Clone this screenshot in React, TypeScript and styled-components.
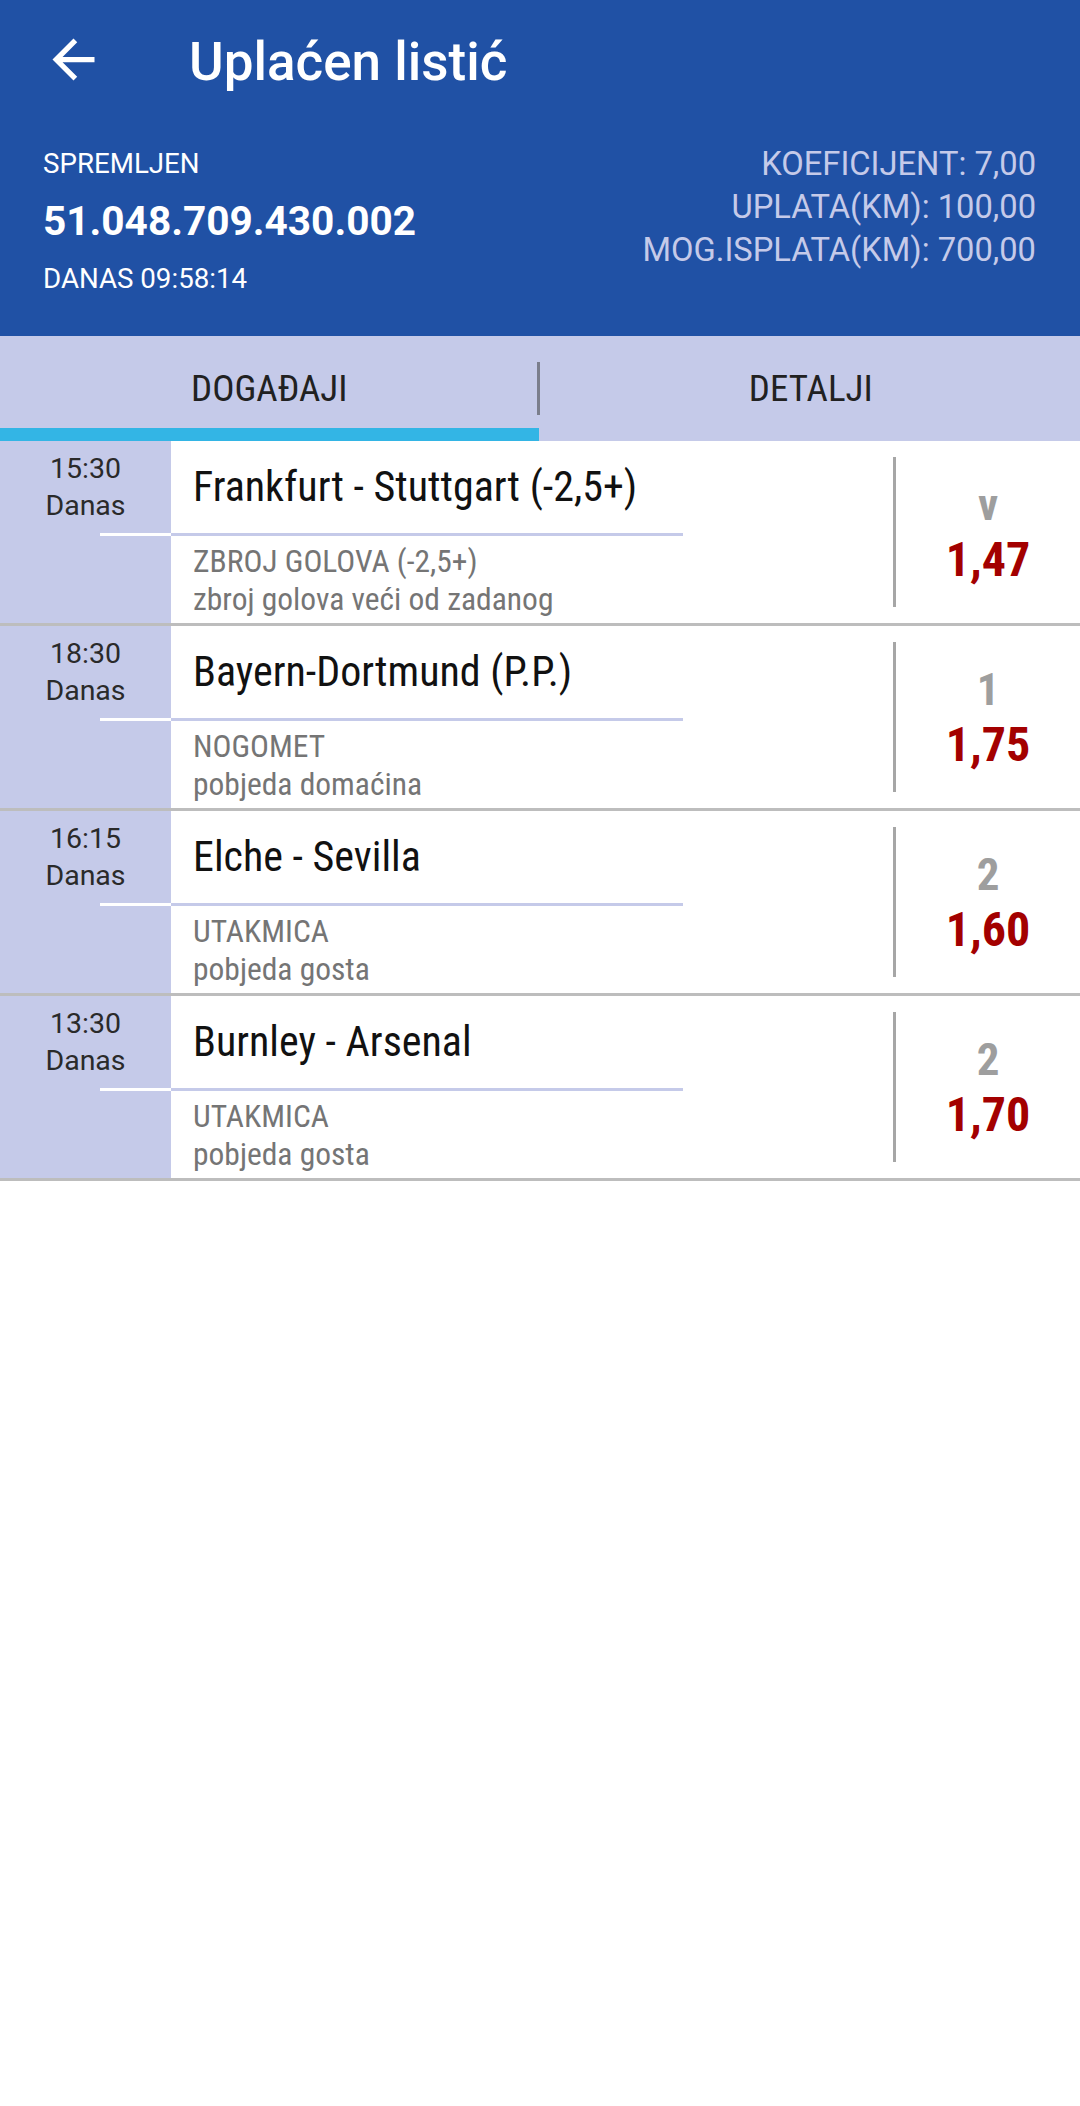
import React from 'react';
import styled, { createGlobalStyle } from 'styled-components';

const CONDENSED = '"Roboto Condensed", Roboto, "Liberation Sans", sans-serif';
const REGULAR = 'Roboto, "Liberation Sans", sans-serif';

const GlobalStyle = createGlobalStyle`
  html, body {
    margin: 0;
    padding: 0;
    background: #ffffff;
  }
  body {
    font-family: ${CONDENSED};
    -webkit-font-smoothing: antialiased;
  }
  * {
    box-sizing: border-box;
  }
`;

const Page = styled.div`
  width: 1080px;
  min-height: 2106px;
  background: #ffffff;
`;

const Header = styled.header`
  background: #2051a5;
  height: 336px;
  display: flex;
  flex-direction: column;
  font-family: ${REGULAR};
`;

const Toolbar = styled.div`
  height: 124px;
  display: flex;
  align-items: center;
  padding-left: 42px;
`;

const BackButton = styled.div`
  width: 63px;
  height: 63px;
  margin-top: -5px;
  display: flex;
  svg {
    width: 63px;
    height: 63px;
  }
`;

const Title = styled.h1`
  margin: 0 0 0 84px;
  font-size: 53px;
  line-height: 60px;
  font-weight: 500;
  color: #ffffff;
`;

const Info = styled.div`
  display: flex;
  justify-content: space-between;
  padding: 20px 44px 0 43px;
`;

const InfoLeft = styled.div`
  display: flex;
  flex-direction: column;
  color: #ffffff;
`;

const InfoLabel = styled.div<{ $gap?: number }>`
  font-size: 27.7px;
  line-height: 40px;
  margin-top: ${({ $gap }) => $gap ?? 0}px;
`;

const TicketNo = styled.div`
  font-size: 40.6px;
  line-height: 50px;
  font-weight: 700;
  margin-top: 12px;
`;

const InfoRight = styled.div`
  display: flex;
  flex-direction: column;
  align-items: flex-end;
  color: #c5cae9;
  font-size: 32.7px;
  line-height: 43px;
  margin-top: -1px;
`;

const Tabs = styled.nav`
  height: 105px;
  background: #c5cae9;
  display: flex;
  align-items: stretch;
`;

const Tab = styled.div<{ $active?: boolean }>`
  flex: 1;
  display: flex;
  align-items: center;
  justify-content: center;
  font-size: 37px;
  color: #212121;
  box-shadow: ${({ $active }) => ($active ? 'inset 0 -13px 0 #33b5e5' : 'none')};
`;

const TabDivider = styled.div`
  width: 3px;
  height: 53px;
  margin-left: -2px;
  margin-right: 2px;
  align-self: center;
  background: #7b7e8c;
`;

const List = styled.div`
  display: flex;
  flex-direction: column;
`;

const Row = styled.div`
  display: flex;
  height: 185px;
  border-bottom: 3px solid #bdbdbd;
`;

const TimeCol = styled.div`
  width: 171px;
  background: #c5cae9;
  display: flex;
  flex-direction: column;
`;

const TimeBox = styled.div`
  height: 92px;
  padding-top: 9px;
  text-align: center;
  color: #2a2a2a;
  font-family: ${REGULAR};
  font-size: 28.5px;
  line-height: 37px;
`;

const TimeRule = styled.div`
  height: 3px;
  margin-left: 100px;
  background: #ffffff;
`;

const Main = styled.div`
  flex: 1;
  display: flex;
  flex-direction: column;
`;

const EventName = styled.div`
  width: 512px;
  height: 95px;
  padding-left: 22px;
  border-bottom: 3px solid #c5cae9;
  font-size: 42px;
  line-height: 92px;
  color: #111111;
  white-space: nowrap;
`;

const Market = styled.div`
  padding: 7px 0 0 22px;
  font-size: 31.5px;
  line-height: 38px;
  color: #757575;
  white-space: nowrap;
`;

const VDivider = styled.div`
  width: 3px;
  margin: 16px 0;
  background: #a6a6a6;
`;

const OddsCol = styled.div`
  width: 184px;
  padding-top: 36px;
  text-align: center;
  font-weight: 700;
`;

const Pick = styled.div`
  font-size: 45px;
  line-height: 55px;
  color: #9e9e9e;
`;

const Odd = styled.div`
  font-size: 48px;
  line-height: 55px;
  color: #a30000;
`;

const BackArrow = () => (
  <svg viewBox="0 0 24 24" fill="#ffffff">
    <path d="M20 11H7.83l5.59-5.59L12 4l-8 8 8 8 1.41-1.41L7.83 13H20v-2z" />
  </svg>
);

interface Bet {
  time: string;
  day: string;
  name: string;
  market: string;
  outcome: string;
  pick: string;
  odd: string;
}

const bets: Bet[] = [
  { time: '15:30', day: 'Danas', name: 'Frankfurt - Stuttgart (-2,5+)', market: 'ZBROJ GOLOVA (-2,5+)', outcome: 'zbroj golova veći od zadanog', pick: 'v', odd: '1,47' },
  { time: '18:30', day: 'Danas', name: 'Bayern-Dortmund (P.P.)', market: 'NOGOMET', outcome: 'pobjeda domaćina', pick: '1', odd: '1,75' },
  { time: '16:15', day: 'Danas', name: 'Elche - Sevilla', market: 'UTAKMICA', outcome: 'pobjeda gosta', pick: '2', odd: '1,60' },
  { time: '13:30', day: 'Danas', name: 'Burnley - Arsenal', market: 'UTAKMICA', outcome: 'pobjeda gosta', pick: '2', odd: '1,70' },
];

const App: React.FC = () => {
  return (
    <Page>
      <GlobalStyle />
      <Header>
        <Toolbar>
          <BackButton>
            <BackArrow />
          </BackButton>
          <Title>Uplaćen listić</Title>
        </Toolbar>
        <Info>
          <InfoLeft>
            <InfoLabel>SPREMLJEN</InfoLabel>
            <TicketNo>51.048.709.430.002</TicketNo>
            <InfoLabel $gap={13}>DANAS 09:58:14</InfoLabel>
          </InfoLeft>
          <InfoRight>
            <div>KOEFICIJENT: 7,00</div>
            <div>UPLATA(KM): 100,00</div>
            <div>MOG.ISPLATA(KM): 700,00</div>
          </InfoRight>
        </Info>
      </Header>

      <Tabs>
        <Tab $active>DOGAĐAJI</Tab>
        <TabDivider />
        <Tab>DETALJI</Tab>
      </Tabs>

      <List>
        {bets.map((bet, index) => (
          <Row key={index}>
            <TimeCol>
              <TimeBox>
                <div>{bet.time}</div>
                <div>{bet.day}</div>
              </TimeBox>
              <TimeRule />
            </TimeCol>
            <Main>
              <EventName>{bet.name}</EventName>
              <Market>
                <div>{bet.market}</div>
                <div>{bet.outcome}</div>
              </Market>
            </Main>
            <VDivider />
            <OddsCol>
              <Pick>{bet.pick}</Pick>
              <Odd>{bet.odd}</Odd>
            </OddsCol>
          </Row>
        ))}
      </List>
    </Page>
  );
};

export default App;
